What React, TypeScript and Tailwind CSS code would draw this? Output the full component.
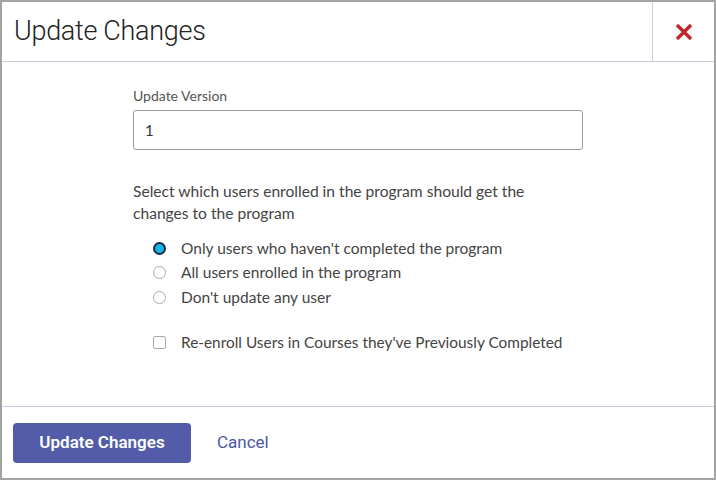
import React, { useState } from "react";

const options = [
  "Only users who haven't completed the program",
  "All users enrolled in the program",
  "Don't update any user",
];

export default function App() {
  const [choice, setChoice] = useState(0);
  const [reenroll, setReenroll] = useState(false);

  return (
    <div className="w-[716px] h-[480px] bg-white border-2 border-[#a3a3a3] flex flex-col font-['Lato',sans-serif] text-[#3f3f46]">
      {/* header */}
      <div className="h-[60px] flex border-b border-[#cccbdc] shrink-0">
        <div className="flex-1 flex items-center pl-3 text-[27px] font-light text-[#222] font-['Roboto',sans-serif] tracking-[-0.3px]">
          Update Changes
        </div>
        <button className="w-[62px] flex items-center justify-center border-l border-[#cccbdc]">
          <svg width="20" height="20" viewBox="0 0 20 20">
            <path d="M3 3 L17 17 M17 3 L3 17" stroke="#c0272d" strokeWidth="3.4" strokeLinecap="butt" />
          </svg>
        </button>
      </div>

      {/* body */}
      <div className="flex-1 flex justify-center">
        <div className="w-[450px] pt-[26px] flex flex-col">
          <label className="text-[14px] text-[#555] leading-4">Update Version</label>
          <input
            defaultValue="1"
            className="mt-[6px] h-10 w-full rounded-[3px] border border-[#9a9aa0] px-[11px] text-[15px] text-[#333] outline-none"
          />

          <p className="mt-[30px] text-[15.6px] leading-[22px] text-[#444]">
            Select which users enrolled in the program should get the
            <br />
            changes to the program
          </p>

          <div className="mt-[12px] pl-5 flex flex-col">
            {options.map((o, i) => (
              <label key={i} className="flex items-center h-[24.5px] cursor-pointer" onClick={() => setChoice(i)}>
                {choice === i ? (
                  <span className="w-[13px] h-[13px] rounded-full bg-[#13b5e6] border-[2.5px] border-[#1d2940] shrink-0" />
                ) : (
                  <span className="w-[13px] h-[13px] rounded-full border border-[#a8a8b4] bg-white shrink-0" />
                )}
                <span className="ml-[15px] text-[15.5px] text-[#444]">{o}</span>
              </label>
            ))}
          </div>

          <label className="mt-[21px] pl-5 flex items-center cursor-pointer" onClick={() => setReenroll(!reenroll)}>
            <span className="w-[13px] h-[13px] rounded-[2px] border border-[#a8a8b4] bg-white shrink-0" />
            <span className="ml-[15px] text-[15.4px] text-[#444]">Re-enroll Users in Courses they've Previously Completed</span>
          </label>
        </div>
      </div>

      {/* footer */}
      <div className="h-[72px] border-t border-[#cccbdc] flex items-center pl-[11px] gap-[26px] shrink-0">
        <button className="h-10 w-[178px] rounded-[4px] bg-[#535ca8] text-white text-[17px] font-semibold font-['Roboto',sans-serif]">
          Update Changes
        </button>
        <button className="text-[17px] text-[#4b56a6] font-['Roboto',sans-serif]">Cancel</button>
      </div>
    </div>
  );
}
